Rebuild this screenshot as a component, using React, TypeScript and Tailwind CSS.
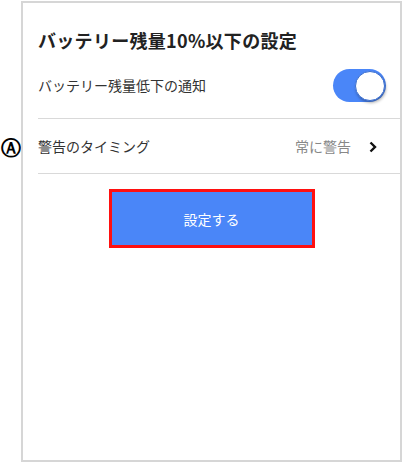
import React from "react";

export default function App() {
  const font = { fontFamily: '"Noto Sans CJK JP", "Noto Sans", sans-serif' };
  return (
    <div className="w-[403px] h-[463px] bg-white flex" style={font}>
      <div className="w-[21px] shrink-0 pt-[136px] flex justify-center">
        <span className="text-[20px] leading-[24px] text-black font-bold" style={{ fontFamily: '"DejaVu Sans", sans-serif' }}>Ⓐ</span>
      </div>
      <div className="mt-[1px] w-[381px] h-[461px] border-2 border-[#d6d6d6] bg-white flex flex-col">
        <div className="pl-[15px] pt-[24px] h-[50px] text-[18px] leading-[26px] font-bold text-[#222] tracking-[0.3px]">
          バッテリー残量10%以下の設定
        </div>
        <div className="ml-[15px] h-[66px] border-b border-[#d9d9d9] flex items-center justify-between pr-[14px]">
          <span className="text-[14px] text-[#333]">バッテリー残量低下の通知</span>
          <div className="w-[53px] h-[33px] rounded-full bg-[#4a86f8] flex items-center justify-end pr-[1px]">
            <div className="w-[30px] h-[30px] rounded-full bg-white border border-[#3b6fd0] shadow-[1px_2px_3px_rgba(0,0,0,0.3)]" />
          </div>
        </div>
        <div className="ml-[15px] h-[55px] border-b border-[#d9d9d9] flex items-center justify-between pr-[23px] pt-[1px]">
          <span className="text-[14px] text-[#333]">警告のタイミング</span>
          <div className="flex items-center gap-[18px]">
            <span className="text-[14px] text-[#888]">常に警告</span>
            <svg width="8" height="12" viewBox="0 0 8 12">
              <polyline points="1.5,1.5 6,6 1.5,10.5" fill="none" stroke="#111" strokeWidth="2.4" strokeLinejoin="miter" />
            </svg>
          </div>
        </div>
        <div className="flex justify-center mt-[15px]">
          <button className="w-[206px] h-[59px] border-[3px] border-[#ff1010] bg-[#4a86f8] text-white text-[14px] pt-[2px]">
            設定する
          </button>
        </div>
      </div>
    </div>
  );
}
